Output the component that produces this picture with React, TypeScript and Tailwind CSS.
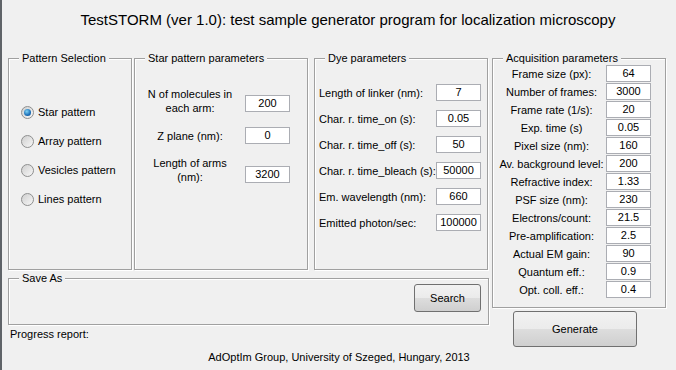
const font = { fontFamily: '"Liberation Sans", Arial, sans-serif' };

const dyeRows = [
  ["Length of linker (nm):", "7"],
  ["Char. r. time_on (s):", "0.05"],
  ["Char. r. time_off (s):", "50"],
  ["Char. r. time_bleach (s):", "50000"],
  ["Em. wavelength (nm):", "660"],
  ["Emitted photon/sec:", "100000"],
];

const acqRows = [
  ["Frame size (px):", "64"],
  ["Number of frames:", "3000"],
  ["Frame rate (1/s):", "20"],
  ["Exp. time (s)", "0.05"],
  ["Pixel size (nm):", "160"],
  ["Av. background level:", "200"],
  ["Refractive index:", "1.33"],
  ["PSF size (nm):", "230"],
  ["Electrons/count:", "21.5"],
  ["Pre-amplification:", "2.5"],
  ["Actual EM gain:", "90"],
  ["Quantum eff.:", "0.9"],
  ["Opt. coll. eff.:", "0.4"],
];

const patterns = ["Star pattern", "Array pattern", "Vesicles pattern", "Lines pattern"];

function Panel({ title, className, children }: { title?: string; className?: string; children?: React.ReactNode }) {
  return (
    <div className={`relative border border-[#a0a0a0] shadow-[inset_1px_1px_0_#fff,1px_1px_0_#fff] ${className ?? ""}`}>
      {title && (
        <span className="absolute -top-[8px] left-[10px] bg-[#f0f0f0] px-[3px] leading-[14px]">{title}</span>
      )}
      {children}
    </div>
  );
}

function Field({ value }: { value: string }) {
  return (
    <div className="flex h-[17px] w-[45px] shrink-0 items-center justify-center border border-[#abadb3] bg-white leading-none">
      {value}
    </div>
  );
}

function Radio({ checked }: { checked?: boolean }) {
  return (
    <span className="flex h-[13px] w-[13px] items-center justify-center rounded-full border border-[#8e8f8f] bg-[linear-gradient(135deg,#cfcfcf,#f7f7f7)]">
      {checked && (
        <span className="h-[7px] w-[7px] rounded-full bg-[radial-gradient(circle_at_40%_35%,#7fd3f5,#1a6eb8_60%,#0d4a86)]" />
      )}
    </span>
  );
}

function Button({ label, className }: { label: string; className?: string }) {
  return (
    <div
      className={`flex items-center justify-center rounded-[3px] border border-[#707070] bg-[linear-gradient(#f2f2f2_0%,#ebebeb_50%,#dddddd_51%,#cfcfcf_100%)] ${className ?? ""}`}
    >
      {label}
    </div>
  );
}

export default function App() {
  return (
    <div
      style={font}
      className="h-[370px] w-[676px] overflow-hidden border-l-2 border-[#5f6368] bg-[#f0f0f0] text-[11px] leading-[14px] text-black"
    >
      {/* Title */}
      <div className="flex h-[40px] items-center justify-center pl-[18px] text-[15px]">
        TestSTORM (ver 1.0): test sample generator program for localization microscopy
      </div>

      <div className="mt-[18px] flex pl-[6px]">
        {/* Left column */}
        <div className="flex w-[481px] flex-col">
          <div className="flex h-[212px]">
            <Panel title="Pattern Selection" className="w-[124px]">
              <div className="flex flex-col gap-[15px] pl-[12px] pt-[46px]">
                {patterns.map((p, i) => (
                  <div key={p} className="flex h-[14px] items-center gap-[4px]">
                    <Radio checked={i === 0} />
                    <span>{p}</span>
                  </div>
                ))}
              </div>
            </Panel>

            <Panel title="Star pattern parameters" className="ml-[2px] w-[174px]">
              <div className="flex flex-col pl-[5px] pt-[28px]">
                <div className="flex items-start">
                  <span className="w-[100px] text-center">
                    N of molecules in
                    <br />
                    each arm:
                  </span>
                  <div className="ml-[5px] mt-[8px]">
                    <Field value="200" />
                  </div>
                </div>
                <div className="mt-[12px] flex items-center">
                  <span className="w-[100px] text-center">Z plane (nm):</span>
                  <div className="ml-[5px]">
                    <Field value="0" />
                  </div>
                </div>
                <div className="mt-[12px] flex items-start">
                  <span className="w-[100px] text-center">
                    Length of arms
                    <br />
                    (nm):
                  </span>
                  <div className="ml-[5px] mt-[10px]">
                    <Field value="3200" />
                  </div>
                </div>
              </div>
            </Panel>

            <Panel title="Dye parameters" className="ml-[6px] w-[174px]">
              <div className="flex flex-col gap-[9px] pl-[4px] pt-[25px]">
                {dyeRows.map(([l, v]) => (
                  <div key={l} className="flex items-center">
                    <span className="w-[117px] whitespace-nowrap">{l}</span>
                    <Field value={v} />
                  </div>
                ))}
              </div>
            </Panel>
          </div>

          <Panel title="Save As" className="mt-[8px] h-[47px]">
            <div className="flex justify-end pr-[7px] pt-[5px]">
              <Button label="Search" className="h-[28px] w-[67px]" />
            </div>
          </Panel>

          <div className="mt-[2px] pl-[2px]">Progress report:</div>
        </div>

        {/* Right column */}
        <div className="ml-[3px] flex w-[174px] flex-col">
          <Panel title="Acquisition parameters" className="h-[250px]">
            <div className="flex flex-col gap-[1px] pl-[4px] pt-[6px]">
              {acqRows.map(([l, v]) => (
                <div key={l} className="flex items-center">
                  <span className="w-[109px] whitespace-nowrap text-center">{l}</span>
                  <Field value={v} />
                </div>
              ))}
            </div>
          </Panel>
          <Button label="Generate" className="ml-[21px] mt-[3px] h-[36px] w-[124px]" />
        </div>
      </div>

      <div className="mt-[3px] text-center">AdOptIm Group, University of Szeged, Hungary, 2013</div>
    </div>
  );
}
